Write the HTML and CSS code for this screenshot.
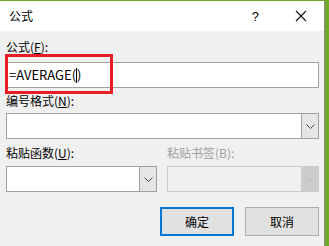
FILE: index.html
```html
<!DOCTYPE html>
<html lang="zh-CN">
<head>
    <meta charset="UTF-8">
    <title>公式</title>
    <link rel="stylesheet" href="styles.css">
</head>
<body>
    <div class="dialog">
        <div class="titlebar">
            <span class="title">公式</span>
            <span class="help">?</span>
            <svg class="close" width="12" height="12" viewBox="0 0 12 12">
                <path d="M1 1 L11 11 M11 1 L1 11" stroke="#111" stroke-width="1.1" fill="none"/>
            </svg>
        </div>
        <div class="content">
            <div class="label">公式(<u>F</u>):</div>
            <div class="formula-row">
                <div class="textbox">=AVERAGE(<span class="caret"></span>)</div>
                <div class="highlight"></div>
            </div>
            <div class="label gap">编号格式(<u>N</u>):</div>
            <div class="combo">
                <div class="combo-field"></div>
                <div class="combo-btn">
                    <svg width="9" height="5" viewBox="0 0 9 5"><path d="M0.5 0.5 L4.5 4.5 L8.5 0.5" stroke="#444" fill="none"/></svg>
                </div>
            </div>
            <div class="pair">
                <div class="col">
                    <div class="label">粘贴函数(<u>U</u>):</div>
                    <div class="combo">
                        <div class="combo-field"></div>
                        <div class="combo-btn">
                            <svg width="9" height="5" viewBox="0 0 9 5"><path d="M0.5 0.5 L4.5 4.5 L8.5 0.5" stroke="#444" fill="none"/></svg>
                        </div>
                    </div>
                </div>
                <div class="col">
                    <div class="label disabled">粘贴书签(B):</div>
                    <div class="combo off">
                        <div class="combo-field"></div>
                        <div class="combo-btn">
                            <svg width="9" height="5" viewBox="0 0 9 5"><path d="M0.5 0.5 L4.5 4.5 L8.5 0.5" stroke="#bbb" fill="none"/></svg>
                        </div>
                    </div>
                </div>
            </div>
            <div class="buttons">
                <button class="btn default">确定</button>
                <button class="btn">取消</button>
            </div>
        </div>
    </div>
</body>
</html>
```

FILE: styles.css
```css
body {
    margin: 0;
    padding-top: 1px;
    background: #72a828; /* desktop green behind the dialog */
    font-family: "Microsoft YaHei", "Noto Sans CJK SC", sans-serif;
    font-size: 12px;
    color: #000;
    height: 245px;
}

.dialog {
    width: 324px;
    height: 245px;
    background: #f0f0f0;
    border-right: 1px solid #8a8a8a;
}

.titlebar {
    height: 30px;
    background: #fff;
    display: flex;
    align-items: center;
    padding-left: 9px;
}

.title {
    flex: 1;
    line-height: 16px;
}

.help {
    font-family: "Liberation Sans", sans-serif;
    font-size: 13px;
    margin-right: 36px;
}

.close {
    margin-right: 17px;
}

.content {
    padding: 0 5px 0 6px;
}

.label {
    height: 16px;
    line-height: 16px;
    margin-top: 8px;
}

.label u {
    text-underline-offset: 1px;
}

.label.gap {
    margin-top: 5px;
}

.disabled {
    color: #a0a0a0;
}

.formula-row {
    position: relative;
    margin-top: 7px;
}

.textbox {
    height: 24px;
    line-height: 24px;
    background: #fff;
    border: 1px solid #a0a0a0;
    padding-left: 2px;
    font-size: 13px;
}

.caret {
    display: inline-block;
    width: 1px;
    height: 15px;
    background: #000;
    vertical-align: -3px;
}

/* red annotation box drawn over the field */
.highlight {
    position: absolute;
    left: -1px;
    top: -8px;
    width: 102px;
    height: 34px;
    border: 3px solid #e81c25;
}

.combo {
    display: flex;
    height: 26px;
    margin-top: 4px;
    border: 1px solid #a0a0a0;
    box-sizing: border-box;
    background: #fff;
}

.combo-field {
    flex: 1;
}

.combo-btn {
    width: 16px;
    background: #e5e5e5;
    border-left: 1px solid #a0a0a0;
    display: flex;
    align-items: center;
    justify-content: center;
}

.combo.off {
    background: #f0f0f0;
    border-color: #cccccc;
}

.combo.off .combo-btn {
    background: #cccccc;
    border-left-color: #cccccc;
}

.pair {
    display: flex;
    gap: 10px;
}

.pair .col:first-child {
    width: 151px;
}

.pair .col:last-child {
    flex: 1;
}

.pair .label {
    margin-top: 6px;
}

.pair .combo {
    margin-top: 5px;
}

.buttons {
    display: flex;
    justify-content: flex-end;
    gap: 11px;
    margin-top: 15px;
}

.btn {
    width: 74px;
    height: 29px;
    background: #e1e1e1;
    border: 1px solid #adadad;
    font-family: inherit;
    font-size: 12px;
    color: #000;
    padding: 0;
}

.btn.default {
    border: 2px solid #0078d7;
}
```
